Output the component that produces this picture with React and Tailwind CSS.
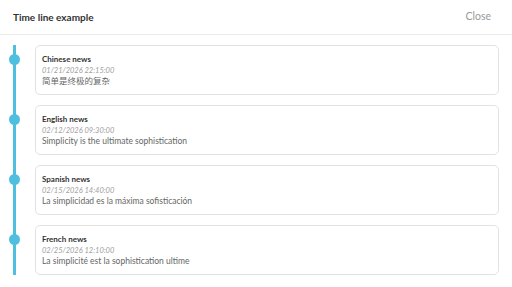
import React from "react";

const items = [
  { title: "Chinese news", date: "01/21/2026 22:15:00", text: "简单是终极的复杂" },
  { title: "English news", date: "02/12/2026 09:30:00", text: "Simplicity is the ultimate sophistication" },
  { title: "Spanish news", date: "02/15/2026 14:40:00", text: "La simplicidad es la máxima sofisticación" },
  { title: "French news", date: "02/25/2026 12:10:00", text: "La simplicité est la sophistication ultime" },
];

export default function App() {
  return (
    <div className="w-[512px] h-[287px] bg-white overflow-hidden" style={{ fontFamily: "Lato, 'Noto Sans CJK SC', sans-serif" }}>
      <div className="h-[35px] px-[13px] flex items-center justify-between border-b border-[#ececec]">
        <span className="text-[10px] font-bold text-[#333]">Time line example</span>
        <span className="text-[10.5px] text-[#999] mr-[8px]">Close</span>
      </div>
      <div className="pt-[10px] pr-[13px]">
        {items.map((it, i) => (
          <div key={i} className="flex">
            <div className="w-[35px] shrink-0 relative">
              <div className="absolute left-[13px] w-[3px] top-0 bottom-0 bg-[#4fbfe0]" />
              <div className="absolute left-[9px] top-[9px] w-[11px] h-[11px] rounded-full bg-[#4fbfe0]" />
            </div>
            <div className={`flex-1 h-[50px] border border-[#e2e2e2] rounded-[5px] px-[6px] pt-[8px] ${i < items.length - 1 ? "mb-[10px]" : ""}`}>
              <div className="text-[8px] leading-[11px] font-bold text-[#333]">{it.title}</div>
              <div className="text-[7.5px] leading-[11px] italic text-[#a0a0a0]">{it.date}</div>
              <div className="text-[8.5px] leading-[11px] text-[#666]">{it.text}</div>
            </div>
          </div>
        ))}
      </div>
    </div>
  );
}
